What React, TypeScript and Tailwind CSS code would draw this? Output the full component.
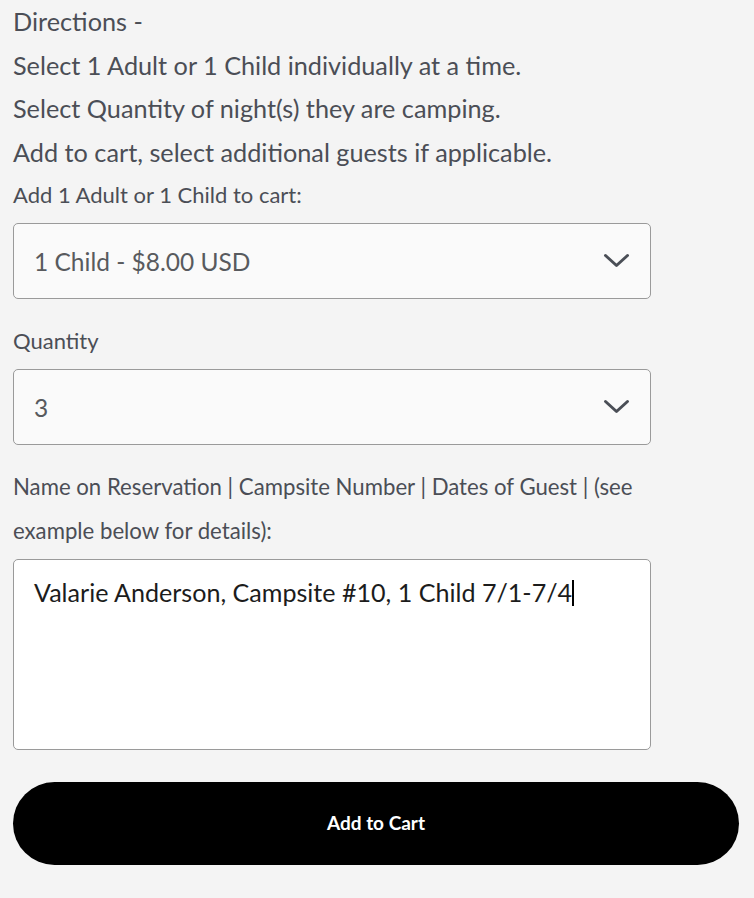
import React from 'react';

const Chevron: React.FC = () => (
  <svg width="27" height="16" viewBox="0 0 27 16" fill="none">
    <path d="M2.5 2.5 L13.5 12.5 L24.5 2.5" stroke="#4a4e56" strokeWidth="3" strokeLinecap="round" strokeLinejoin="round" />
  </svg>
);

const FakeSelect: React.FC<{ value: string }> = ({ value }) => (
  <div className="flex h-[76px] w-[638px] items-center justify-between rounded-[5px] border border-[#9a9a9a] bg-[#fafafa] pl-5 pr-[20px]">
    <span className="pt-[3px] text-[24.5px] text-[#585a5e]">{value}</span>
    <Chevron />
  </div>
);

export default function App() {
  return (
    <div className="min-h-[898px] w-[754px] bg-[#f4f4f4] px-[13px] font-['Lato','Noto_Sans',sans-serif] text-[#4b4e56]">
      <div className="text-[25.25px] leading-[43.7px]">
        <p>Directions -</p>
        <p>Select 1 Adult or 1 Child individually at a time.</p>
        <p>Select Quantity of night(s) they are camping.</p>
        <p>Add to cart, select additional guests if applicable.</p>
      </div>

      <label className="mb-2 block text-[22px] leading-[40px]">Add 1 Adult or 1 Child to cart:</label>
      <FakeSelect value="1 Child - $8.00 USD" />

      <label className="mb-2 mt-[22px] block text-[22px] leading-[40px]">Quantity</label>
      <FakeSelect value="3" />

      <label className="mb-[6px] mt-5 block w-[640px] text-[22.2px] leading-[44px]">
        Name on Reservation | Campsite Number | Dates of Guest | (see example below for details):
      </label>
      <div className="h-[191px] w-[638px] rounded-[5px] border border-[#9a9a9a] bg-white pl-5 pt-4">
        <span className="text-[25.1px] leading-[30px] text-[#1c1c1c]">
          Valarie Anderson, Campsite #10, 1 Child 7/1-7/4
          <span className="inline-block h-[26px] w-[2px] translate-y-[4px] bg-black" />
        </span>
      </div>

      <button className="mt-8 flex h-[83px] w-[726px] items-center justify-center rounded-full bg-black text-[19px] font-bold text-white">
        Add to Cart
      </button>
    </div>
  );
}
